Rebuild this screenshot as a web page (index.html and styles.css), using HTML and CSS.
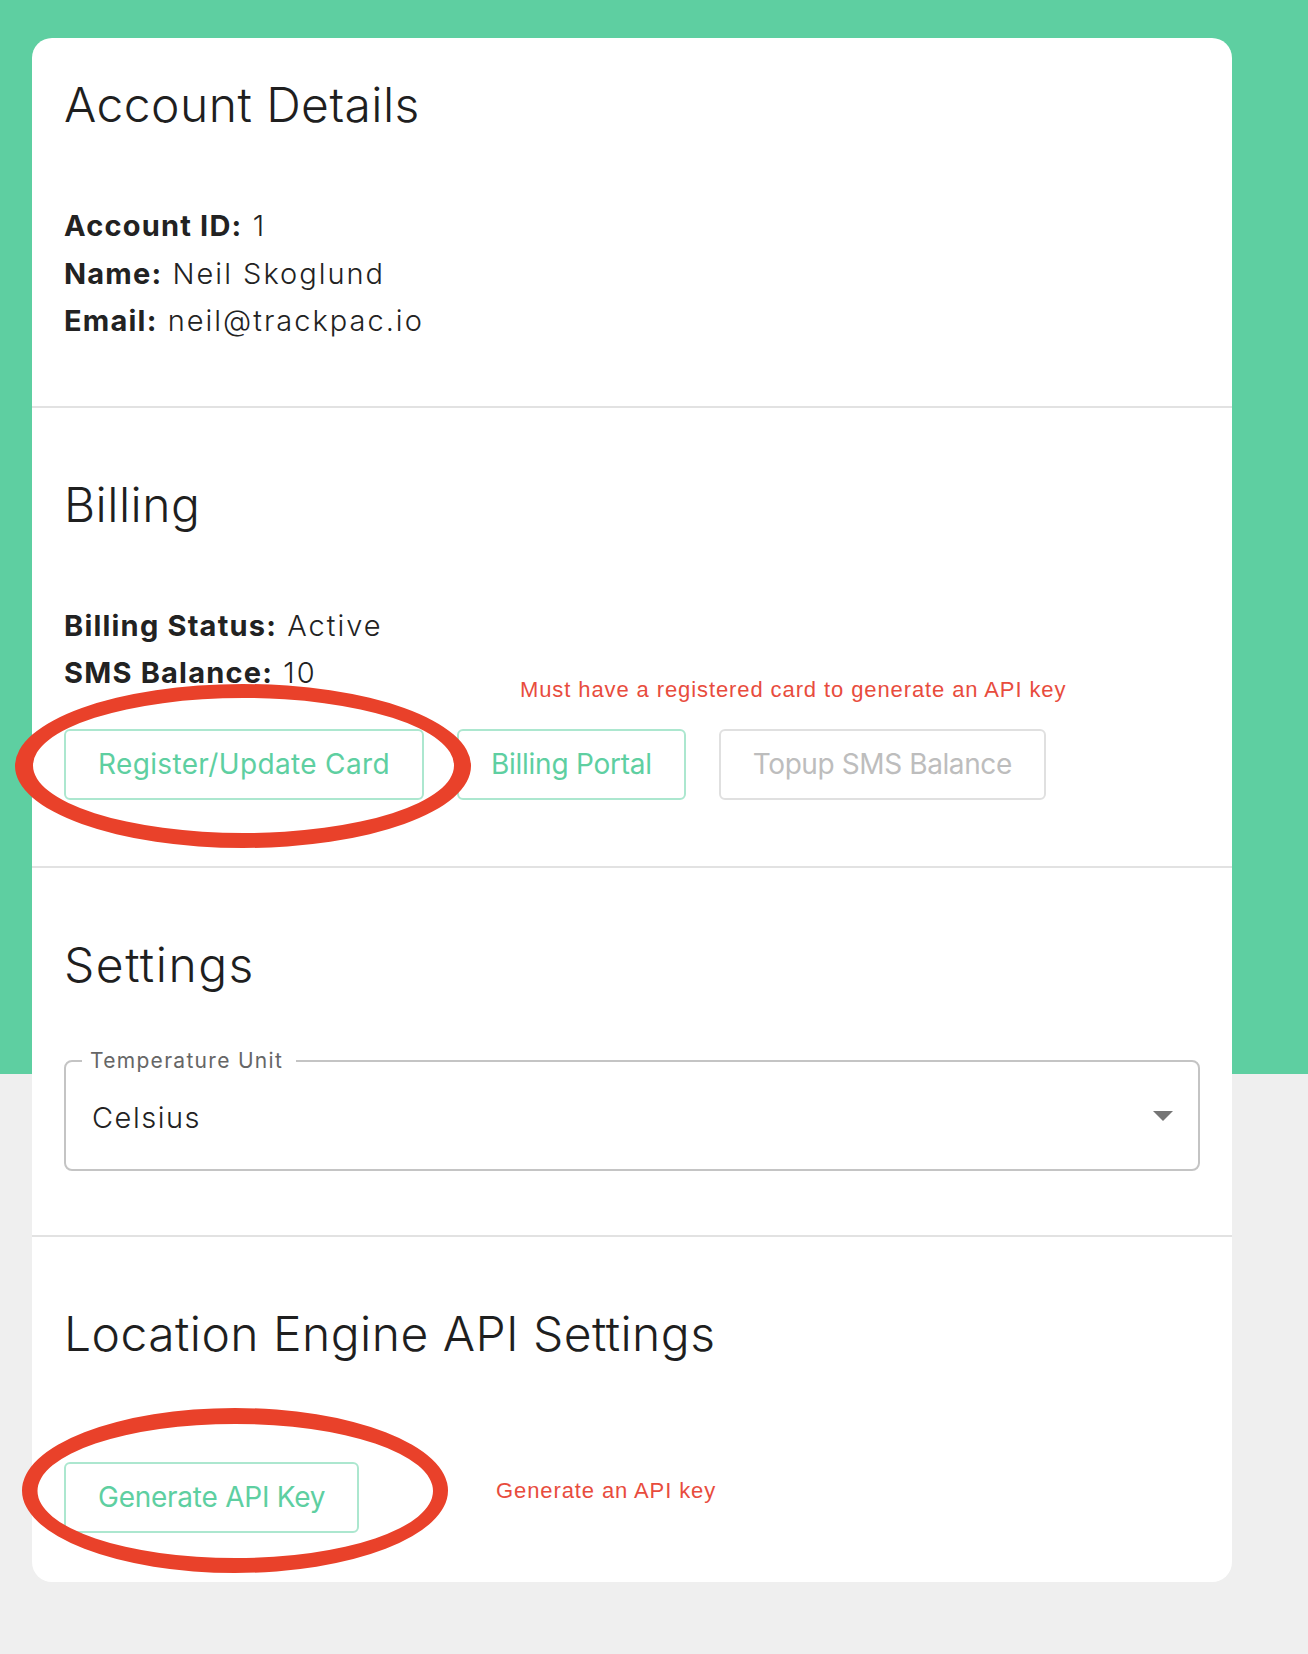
FILE: index.html
```html
<!DOCTYPE html>
<html lang="en">
<head>
<meta charset="utf-8">
<title>Account</title>
<link rel="stylesheet" href="styles.css">
</head>
<body>
<div class="page">
  <main class="card">
    <section class="section first">
      <h2 class="title">Account Details</h2>
      <div class="info">
        <p><b>Account ID:</b> 1</p>
        <p><b>Name:</b> Neil Skoglund</p>
        <p><b>Email:</b> neil@trackpac.io</p>
      </div>
    </section>
    <section class="section billing">
      <h2 class="title">Billing</h2>
      <div class="info">
        <p><b>Billing Status:</b> Active</p>
        <p><b>SMS Balance:</b> 10</p>
      </div>
      <div class="actions">
        <button class="btn btn-card" type="button">Register/Update Card</button>
        <button class="btn" type="button">Billing Portal</button>
        <button class="btn disabled" type="button" disabled>Topup SMS Balance</button>
      </div>
    </section>
    <section class="section settings">
      <h2 class="title">Settings</h2>
      <fieldset class="select">
        <legend>Temperature Unit</legend>
        <div class="select-row">
          <span class="select-value">Celsius</span>
          <svg class="select-arrow" width="20" height="10" viewBox="0 0 20 10"><path d="M0 0 H20 L10 10 Z" fill="#757575"/></svg>
        </div>
      </fieldset>
    </section>
    <section class="section api">
      <h2 class="title">Location Engine API Settings</h2>
      <div class="actions">
        <button class="btn" type="button">Generate API Key</button>
      </div>
    </section>
  </main>
  <div class="annotations">
    <svg class="marks" width="1308" height="1654" viewBox="0 0 1308 1654">
      <path fill="#e9412a" fill-rule="evenodd" d="M15,766 a228,82 0 1,0 456,0 a228,82 0 1,0 -456,0 Z M33,765.5 a210.5,67.5 0 1,0 421,0 a210.5,67.5 0 1,0 -421,0 Z"/>
      <path fill="#e9412a" fill-rule="evenodd" d="M22,1490.5 a213,82.5 0 1,0 426,0 a213,82.5 0 1,0 -426,0 Z M37.5,1491 a197.75,67 0 1,0 395.5,0 a197.75,67 0 1,0 -395.5,0 Z"/>
    </svg>
    <span class="note note-card">Must have a registered card to generate an API key</span>
    <span class="note note-api">Generate an API key</span>
  </div>
</div>
</body>
</html>
```

FILE: styles.css
```css
html, body {
  margin: 0;
  padding: 0;
}

body {
  background: linear-gradient(#5ecfa1 0, #5ecfa1 1074px, #efefef 1074px);
  background-repeat: no-repeat;
  background-color: #efefef;
  font-family: Inter, "Noto Sans", sans-serif;
  color: #222222;
}

.page {
  position: relative;
  box-sizing: border-box;
  height: 1654px;
  padding: 38px 0 0 32px;
}

.card {
  width: 1200px;
  background: #ffffff;
  border-radius: 20px;
  overflow: hidden;
}

.section {
  padding: 68px 32px 0;
  border-top: 2px solid #e2e2e2;
}

.section.first {
  border-top: 0;
  padding-top: 38px;
  padding-bottom: 61px;
}

.title {
  margin: 0 0 68px;
  font-size: 48px;
  line-height: 58px;
  font-weight: 300;
  color: #1f1f1f;
  letter-spacing: 0.45px;
}

.settings .title {
  letter-spacing: 1.5px;
}

.info p {
  margin: 0;
  font-size: 29px;
  line-height: 47.5px;
  font-weight: 300;
  letter-spacing: 2px;
}

.info b {
  font-weight: 700;
  letter-spacing: 1.2px;
}

.billing {
  padding-bottom: 66px;
}

.actions {
  display: flex;
  gap: 33px;
  margin-top: 32px;
}

.btn {
  height: 71px;
  padding: 0 32px;
  box-sizing: border-box;
  border: 2px solid #ace7cf;
  border-radius: 6px;
  background: #ffffff;
  color: #5ecfa1;
  font-family: Inter, "Noto Sans", sans-serif;
  font-size: 28px;
  font-weight: 400;
  letter-spacing: -0.25px;
  cursor: pointer;
}

.btn-card {
  letter-spacing: 0.35px;
}

.btn.disabled {
  border-color: #e0e0e0;
  color: #bdbdbd;
  letter-spacing: -0.4px;
  cursor: default;
}

.settings {
  padding-bottom: 64px;
}

.settings .title {
  margin-bottom: 55px;
}

.select {
  margin: 0;
  padding: 0 25px 6px 26px;
  border: 2px solid #c4c4c4;
  border-radius: 8px;
  min-width: 0;
}

.select legend {
  margin-left: -10px;
  padding: 0 13px 0 8px;
  font-size: 21px;
  line-height: 24px;
  letter-spacing: 1.3px;
  color: #666666;
}

.select-row {
  height: 90px;
  display: flex;
  align-items: center;
  justify-content: space-between;
}

.select-value {
  font-size: 29px;
  font-weight: 300;
  letter-spacing: 1.5px;
  color: #222222;
}

.select-arrow {
  display: block;
  margin-bottom: 4px;
}

.api {
  padding-bottom: 49px;
}

.api .title {
  margin-bottom: 99px;
}

.api .actions {
  margin-top: 0;
}

.annotations {
  position: absolute;
  top: 0;
  left: 0;
  width: 1308px;
  height: 1654px;
  pointer-events: none;
}

.marks {
  position: absolute;
  top: 0;
  left: 0;
}

.note {
  position: absolute;
  font-family: "Liberation Sans", Arial, sans-serif;
  font-size: 22px;
  line-height: 22px;
  letter-spacing: 0.9px;
  color: #e84c3d;
  white-space: nowrap;
}

.note-card {
  top: 679px;
  left: 520px;
}

.note-api {
  top: 1480px;
  left: 496px;
}
```
